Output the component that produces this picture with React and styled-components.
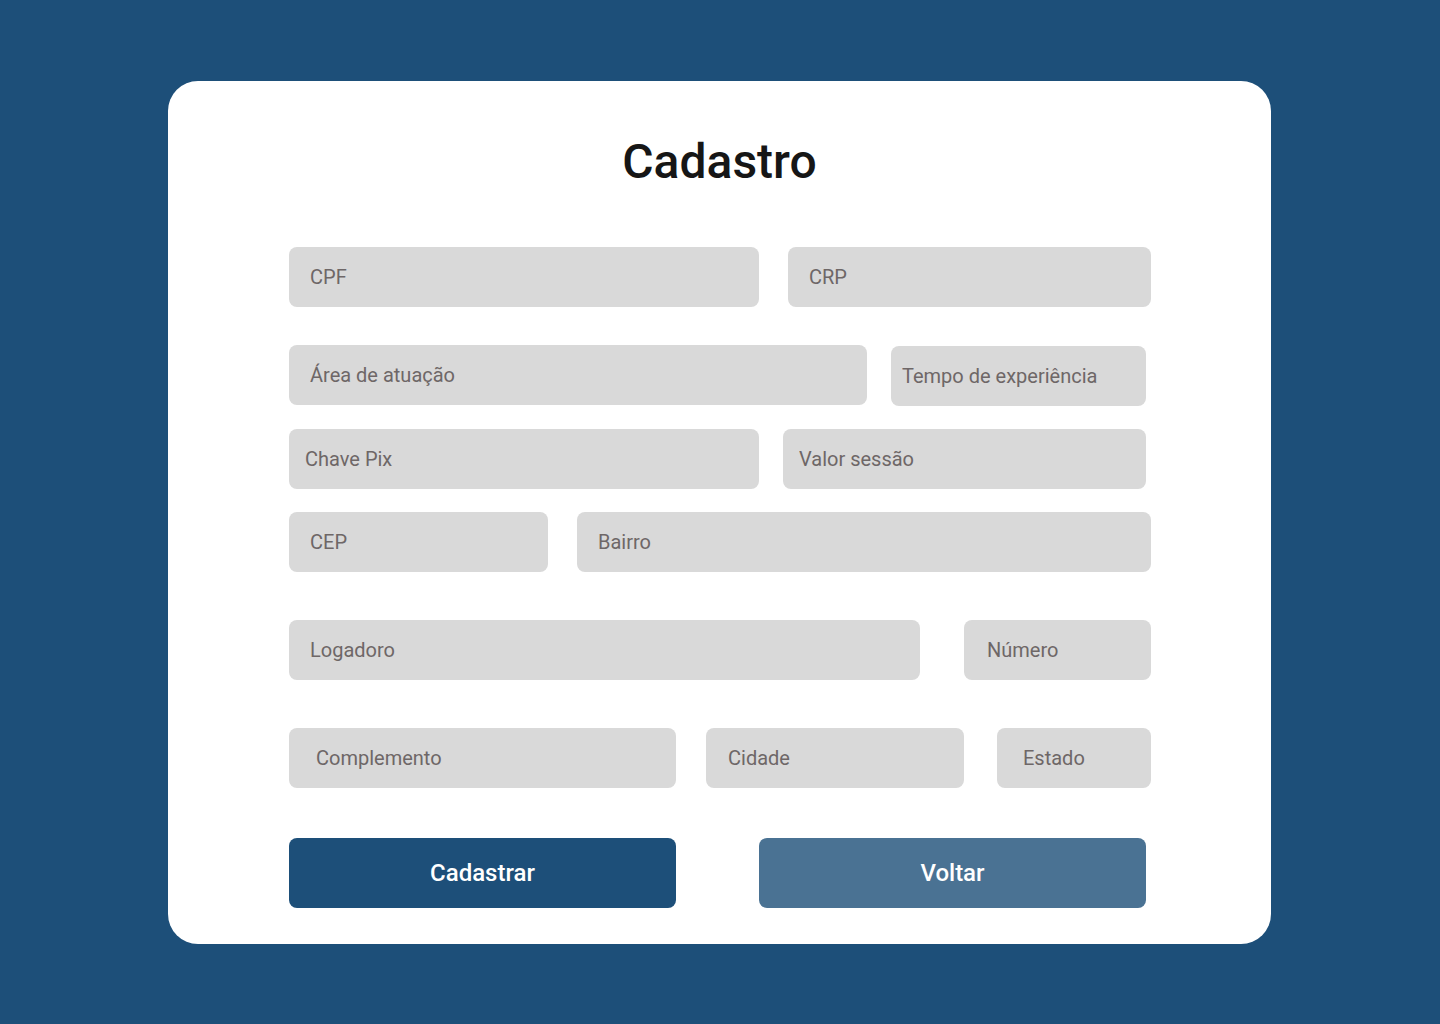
import React from 'react';
import styled, { createGlobalStyle } from 'styled-components';

const GlobalStyle = createGlobalStyle`
  html, body {
    margin: 0;
    padding: 0;
    background: #1d4f79;
    font-family: Roboto, "Liberation Sans", sans-serif;
  }
`;

const Page = styled.div`
  width: 1440px;
  height: 1024px;
  padding-top: 81px;
  box-sizing: border-box;
  background: #1d4f79;
`;

const Card = styled.form`
  width: 1103px;
  height: 863px;
  margin-left: 168px;
  box-sizing: border-box;
  padding: 54px 0 0 121px;
  background: #ffffff;
  border-radius: 30px;
  display: flex;
  flex-direction: column;
`;

const Title = styled.h1`
  margin: 0 0 59px -121px;
  width: 1103px;
  text-align: center;
  font-size: 48px;
  line-height: 53px;
  font-weight: 500;
  color: #161616;
`;

const Row = styled.div`
  display: flex;
  align-items: flex-start;
  gap: ${(p) => p.gap || 24}px;
  margin-top: ${(p) => p.top || 0}px;
`;

const Field = styled.input`
  width: ${(p) => p.w}px;
  height: 60px;
  margin-top: ${(p) => p.shift || 0}px;
  box-sizing: border-box;
  padding: 0 0 0 ${(p) => p.indent || 21}px;
  border: none;
  outline: none;
  border-radius: 8px;
  background: #d9d9d9;
  font-family: Roboto, "Liberation Sans", sans-serif;
  font-size: 20px;
  color: #6e6767;

  &::placeholder {
    color: #6e6767;
    opacity: 1;
  }
`;

const Button = styled.button`
  width: 387px;
  height: 70px;
  border: none;
  border-radius: 8px;
  background: ${(p) => (p.secondary ? '#4a7293' : '#1d4f79')};
  color: #ffffff;
  font-family: Roboto, "Liberation Sans", sans-serif;
  font-size: 24px;
  font-weight: 500;
  cursor: pointer;
`;

export default function App() {
  return (
    <>
      <GlobalStyle />
      <Page>
        <Card onSubmit={(e) => e.preventDefault()}>
          <Title>Cadastro</Title>
          <Row gap={29}>
            <Field w={470} placeholder="CPF" />
            <Field w={363} placeholder="CRP" />
          </Row>
          <Row top={38}>
            <Field w={578} placeholder="Área de atuação" />
            <Field w={255} shift={1} indent={11} placeholder="Tempo de experiência" />
          </Row>
          <Row top={23}>
            <Field w={470} indent={16} placeholder="Chave Pix" />
            <Field w={363} indent={16} placeholder="Valor sessão" />
          </Row>
          <Row top={23} gap={29}>
            <Field w={259} placeholder="CEP" />
            <Field w={574} placeholder="Bairro" />
          </Row>
          <Row top={48} gap={44}>
            <Field w={631} placeholder="Logadoro" />
            <Field w={187} indent={23} placeholder="Número" />
          </Row>
          <Row top={48} gap={30}>
            <Field w={387} indent={27} placeholder="Complemento" />
            <Field w={258} indent={22} placeholder="Cidade" />
            <Field w={154} indent={26} style={{ marginLeft: 3 }} placeholder="Estado" />
          </Row>
          <Row top={50} gap={83}>
            <Button type="submit">Cadastrar</Button>
            <Button type="button" secondary>Voltar</Button>
          </Row>
        </Card>
      </Page>
    </>
  );
}
